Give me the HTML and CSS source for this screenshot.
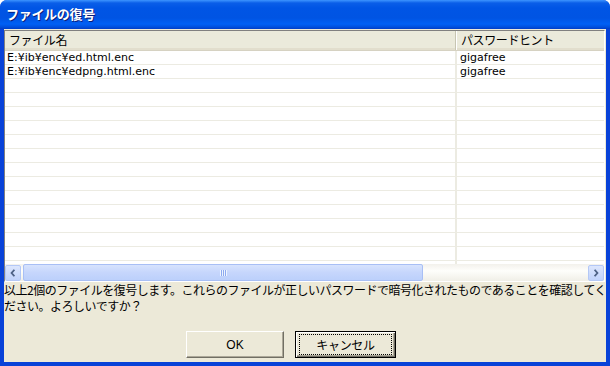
FILE: index.html
```html
<!DOCTYPE html>
<html lang="ja">
<head>
<meta charset="utf-8">
<link rel="stylesheet" href="styles.css">
</head>
<body>
<div class="window">
  <div class="titlebar"><span class="title">ファイルの復号</span></div>
  <div class="client">
    <div class="listview">
      <div class="header">
        <div class="hcol c1">ファイル名</div>
        <div class="hcol c2">パスワードヒント</div>
      </div>
      <div class="rows">
        <div class="row"><div class="cell c1">E:¥ib¥enc¥ed.html.enc</div><div class="cell c2">gigafree</div></div>
        <div class="row"><div class="cell c1">E:¥ib¥enc¥edpng.html.enc</div><div class="cell c2">gigafree</div></div>
        <div class="row"><div class="cell c1"></div><div class="cell c2"></div></div>
        <div class="row"><div class="cell c1"></div><div class="cell c2"></div></div>
        <div class="row"><div class="cell c1"></div><div class="cell c2"></div></div>
        <div class="row"><div class="cell c1"></div><div class="cell c2"></div></div>
        <div class="row"><div class="cell c1"></div><div class="cell c2"></div></div>
        <div class="row"><div class="cell c1"></div><div class="cell c2"></div></div>
        <div class="row"><div class="cell c1"></div><div class="cell c2"></div></div>
        <div class="row"><div class="cell c1"></div><div class="cell c2"></div></div>
        <div class="row"><div class="cell c1"></div><div class="cell c2"></div></div>
        <div class="row"><div class="cell c1"></div><div class="cell c2"></div></div>
        <div class="row"><div class="cell c1"></div><div class="cell c2"></div></div>
        <div class="row"><div class="cell c1"></div><div class="cell c2"></div></div>
        <div class="row"><div class="cell c1"></div><div class="cell c2"></div></div>
        <div class="row"><div class="cell c1"></div><div class="cell c2"></div></div>
      </div>
      <div class="hscroll">
        <div class="sbtn"><svg width="15" height="15" viewBox="0 0 15 15"><path d="M9 4 L6 7.5 L9 11" fill="none" stroke="#4d6185" stroke-width="2"/></svg></div>
        <div class="thumb"><span class="grip"></span></div>
        <div class="track"></div>
        <div class="sbtn"><svg width="15" height="15" viewBox="0 0 15 15"><path d="M6 4 L9 7.5 L6 11" fill="none" stroke="#4d6185" stroke-width="2"/></svg></div>
      </div>
    </div>
    <div class="message"><div class="line">以上2個のファイルを復号します。これらのファイルが正しいパスワードで暗号化されたものであることを確認してく</div><div class="line">ださい。よろしいですか？</div></div>
    <div class="buttons">
      <button class="btn">OK</button>
      <button class="btn default"><span class="focus">キャンセル</span></button>
    </div>
  </div>
</div>
</body>
</html>
```
FILE: styles.css
```css
html, body { margin: 0; padding: 0; }
body {
  width: 610px;
  height: 366px;
  overflow: hidden;
  font-family: "Noto Sans CJK JP", "Liberation Sans", sans-serif;
  font-size: 12px;
  color: #000;
}
.window {
  width: 610px;
  height: 366px;
  display: flex;
  flex-direction: column;
  background: #0842d8;
  border-radius: 7px 7px 0 0;
  overflow: hidden;
}
.titlebar {
  height: 29px;
  flex: none;
  background: linear-gradient(to bottom, #3d95ff 0px, #0a5ee8 3px, #0055e5 8px, #0054e3 18px, #0060f5 24px, #0050de 27px, #003dc7 29px);
  display: flex;
  align-items: center;
  padding-left: 6px;
}
.title {
  color: #fff;
  font-weight: bold;
  font-size: 13px;
  text-shadow: 1px 1px 0 #0a1e7a;
  margin-top: -2px;
  letter-spacing: -0.3px;
}
.client {
  flex: 1;
  margin: 0 4px 4px 4px;
  background: #ece9d8;
  display: flex;
  flex-direction: column;
  padding-top: 1px;
}
.listview {
  height: 250px;
  margin-right: 1px;
  border: 1px solid;
  border-color: #808080 #ffffff #ffffff #808080;
  background: #fff;
  display: flex;
  flex-direction: column;
  overflow: hidden;
}
.header {
  height: 19px;
  flex: none;
  display: flex;
  background: #ebeadb;
  border-bottom: 1px solid #d6d2c2;
  box-shadow: inset 0 -2px 0 #e2decd;
}
.hcol {
  height: 19px;
  line-height: 18px;
  padding-left: 4px;
  box-sizing: border-box;
  font-size: 12px;
  white-space: nowrap;
  letter-spacing: -0.4px;
}
.header .c1 {
  width: 451px;
  border-right: 1px solid #c7c5b2;
  box-shadow: 1px 0 0 #fff;
}
.header .c2 { flex: 1; padding-left: 5px; }
.rows {
  flex: 1;
  overflow: hidden;
}
.row {
  height: 14px;
  display: flex;
  border-bottom: 1px solid #ecebe2;
  box-sizing: border-box;
}
.cell {
  height: 13px;
  line-height: 13px;
  font-family: "DejaVu Sans", sans-serif;
  font-size: 11px;
  white-space: nowrap;
}
.row .c1 { width: 448px; padding-left: 2px; border-right: 2px solid #ecebe2; }
.row .c2 { flex: 1; padding-left: 3px; }
.hscroll {
  height: 17px;
  flex: none;
  display: flex;
  background: linear-gradient(to bottom, #f3f1ec, #fefefb 40%, #f0efe7);
}
.sbtn {
  margin: 1px 1px 1px 0;
  background: linear-gradient(to bottom, #dce6fd, #c1d3fb);
  border: 1px solid #b4c8f6;
  border-radius: 2px;
  width: 14px;
  height: 14px;
  display: flex;
  align-items: center;
  justify-content: center;
}
.sbtn svg { width: 14px; height: 14px; }
.sbtn:last-child { margin-right: 0; margin-left: 1px; }
.thumb {
  width: 398px;
  margin: 0 0 0 1px;
  height: 15px;
  border: 1px solid #a8bff5;
  border-radius: 2px;
  background: linear-gradient(to bottom, #d7e3fd, #c6d6fc 50%, #bcd0fb);
  display: flex;
  align-items: center;
  justify-content: center;
}
.grip {
  width: 7px;
  height: 6px;
  background: repeating-linear-gradient(to right, #eef4fe 0 1px, #8caaf0 1px 2px);
}
.track { flex: 1; }
.message {
  height: 32px;
  width: 602px;
  overflow: hidden;
  font-size: 12px;
  letter-spacing: -0.5px;
}
.line {
  height: 16px;
  line-height: 16px;
  white-space: nowrap;
}
.buttons {
  display: flex;
  justify-content: flex-start;
  gap: 11px;
  margin-top: 17px;
  padding-left: 182px;
}
.btn {
  width: 98px;
  height: 27px;
  border: 1px solid;
  border-color: #fff #716f64 #716f64 #fff;
  box-shadow: inset -1px -1px 0 #aca899;
  background: #ece9d8;
  font-family: "Liberation Sans", "Noto Sans CJK JP", sans-serif;
  font-size: 12px;
  color: #000;
  padding: 0;
  display: flex;
  align-items: center;
  justify-content: center;
}
.btn.default {
  width: 101px;
  border: 1px solid #000;
  box-shadow: inset 1px 1px 0 #fff, inset -1px -1px 0 #716f64, inset -2px -2px 0 #aca899;
  font-family: "Noto Sans CJK JP", sans-serif;
}
.focus {
  display: flex;
  align-items: center;
  justify-content: center;
  width: 91px;
  height: 19px;
  border: 1px dotted #000;
  letter-spacing: -0.3px;
}
```
